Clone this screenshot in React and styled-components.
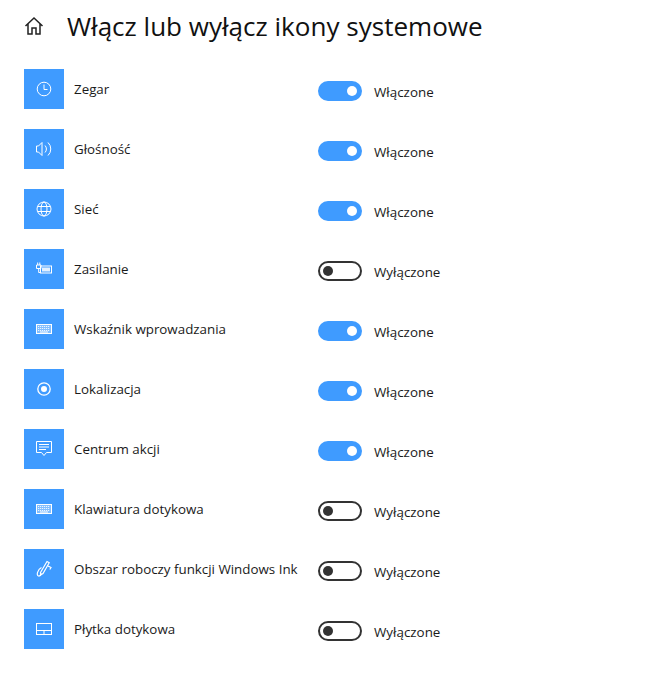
import React from "react";
import styled, { createGlobalStyle } from "styled-components";

const Global = createGlobalStyle`
  html, body { margin: 0; padding: 0; background: #fff; }
  body { width: 653px; height: 683px; overflow: hidden; font-family: "Open Sans", "Noto Sans", sans-serif; color: #111; }
`;
const Page = styled.div`
  display: flex; flex-direction: column; padding: 7px 0 0 24px; box-sizing: border-box;
`;
const Header = styled.header`
  display: flex; align-items: center; height: 38px; margin-bottom: 24px;
`;
const HomeButton = styled.div`
  width: 20px; height: 20px; margin-right: 23px; display: flex; color: #222;
`;
const Title = styled.h1`
  margin: -1px 0 0; font-size: 26.05px; font-weight: 400; line-height: 38px; color: #111;
`;
const List = styled.div`
  display: flex; flex-direction: column; gap: 20px;
`;
const Row = styled.div`
  display: grid; grid-template-columns: 40px 254px auto; height: 40px;
`;
const IconBox = styled.div`
  width: 40px; height: 40px; background: #3f9bff; display: flex; align-items: center; justify-content: center; color: #fff;
`;
const Name = styled.div`
  padding-left: 10px; font-size: 13.35px; line-height: 40px; height: 40px; white-space: nowrap; color: #1a1a1a;
`;
const ToggleCell = styled.div`
  display: flex; align-items: center; height: 40px; margin-top: 2px;
`;
const Track = styled.div`
  width: 44px; height: 20px; border-radius: 10px; box-sizing: border-box; display: flex; align-items: center; padding: 0 3px;
  background: ${p => (p.$on ? "#3f9bff" : "#fff")};
  border: 2px solid ${p => (p.$on ? "#3f9bff" : "#333")};
  justify-content: ${p => (p.$on ? "flex-end" : "flex-start")};
`;
const Knob = styled.div`
  width: 10px; height: 10px; border-radius: 50%; background: ${p => (p.$on ? "#fff" : "#333")};
`;
const State = styled.span`
  margin-left: 12px; font-size: 13.4px; line-height: 20px; padding-top: 1px; color: #1a1a1a;
`;
const Glyph = styled.svg`
  width: 16px; height: 16px; fill: none; stroke: currentColor; stroke-width: 1; overflow: visible;
`;

const icons = {
  clock: <Glyph viewBox="0 0 16 16"><circle cx="8" cy="8" r="6.8"/><path d="M8 3.5V8.5H11.5"/></Glyph>,
  sound: <Glyph viewBox="0 0 16 16"><path d="M0.5 5H2.5L6 1.5V14.5L2.5 11H0.5Z"/><path d="M9 4.5a5 5 0 0 1 0 7M12 1.5a9 9 0 0 1 0 13"/></Glyph>,
  globe: <Glyph viewBox="0 0 16 16"><circle cx="8" cy="8" r="7"/><ellipse cx="8" cy="8" rx="3" ry="7"/><path d="M1.5 5.5H14.5M1.5 10.5H14.5"/></Glyph>,
  power: <Glyph viewBox="0 0 16 16"><path d="M0.5 4V7.5H5V4ZM1.7 4V1.5M3.8 4V1.5M2.7 7.5V11.5H5"/><rect x="4.5" y="5" width="11" height="7"/><rect x="6" y="6.5" width="8" height="4" fill="currentColor" stroke="none" opacity=".85"/></Glyph>,
  keyboard: <Glyph viewBox="0 0 16 16"><rect x="0.5" y="3.5" width="15" height="9" fill="currentColor" fillOpacity=".35"/><path d="M2 5.5H14M2 7.5H14M2 9.5H14" strokeDasharray="1.2 .8" strokeOpacity=".85"/><path d="M4 11H12"/></Glyph>,
  location: <Glyph viewBox="0 0 16 16"><circle cx="8" cy="8" r="6.2" strokeWidth="1.3"/><circle cx="8" cy="8" r="3" fill="currentColor" stroke="none"/></Glyph>,
  action: <Glyph viewBox="0 0 16 16"><path d="M0.5 0.5H15.5V11.5H10.5L8 14.5L5.5 11.5H0.5Z"/><path d="M3 3.5H13M3 6H13M3 8.5H10"/></Glyph>,
  ink: <Glyph viewBox="0 0 16 16"><path d="M4.5 11.5L11 0.5L13.2 1.7L7 12.5L4.5 14Z" strokeWidth="1.2"/><path d="M12 5L15 6.5L13.8 8.5M5.5 6.5C1.5 8.5 0 14.5 2.5 15C4.2 15.3 5 14 5.5 12.5" strokeWidth="1.2"/></Glyph>,
  touchpad: <Glyph viewBox="0 0 16 16"><rect x="0.5" y="2.5" width="15" height="11"/><path d="M0.5 9.5H15.5M8 9.5V13.5"/></Glyph>,
};

const items = [
  ["clock", "Zegar", true],
  ["sound", "Głośność", true],
  ["globe", "Sieć", true],
  ["power", "Zasilanie", false],
  ["keyboard", "Wskaźnik wprowadzania", true],
  ["location", "Lokalizacja", true],
  ["action", "Centrum akcji", true],
  ["keyboard", "Klawiatura dotykowa", false],
  ["ink", "Obszar roboczy funkcji Windows Ink", false],
  ["touchpad", "Płytka dotykowa", false],
];

export default function App() {
  return (
    <Page>
      <Global />
      <Header>
        <HomeButton>
          <svg viewBox="0 0 20 20" width="20" height="20" fill="none" stroke="currentColor" strokeWidth="1.5">
            <path d="M1.5 10L10 2L18.5 10M4 8V18H8V12H12V18H16V8"/>
          </svg>
        </HomeButton>
        <Title>Włącz lub wyłącz ikony systemowe</Title>
      </Header>
      <List>
        {items.map(([icon, name, on]) => (
          <Row key={name}>
            <IconBox>{icons[icon]}</IconBox>
            <Name>{name}</Name>
            <ToggleCell>
              <Track $on={on}><Knob $on={on} /></Track>
              <State>{on ? "Włączone" : "Wyłączone"}</State>
            </ToggleCell>
          </Row>
        ))}
      </List>
    </Page>
  );
}
